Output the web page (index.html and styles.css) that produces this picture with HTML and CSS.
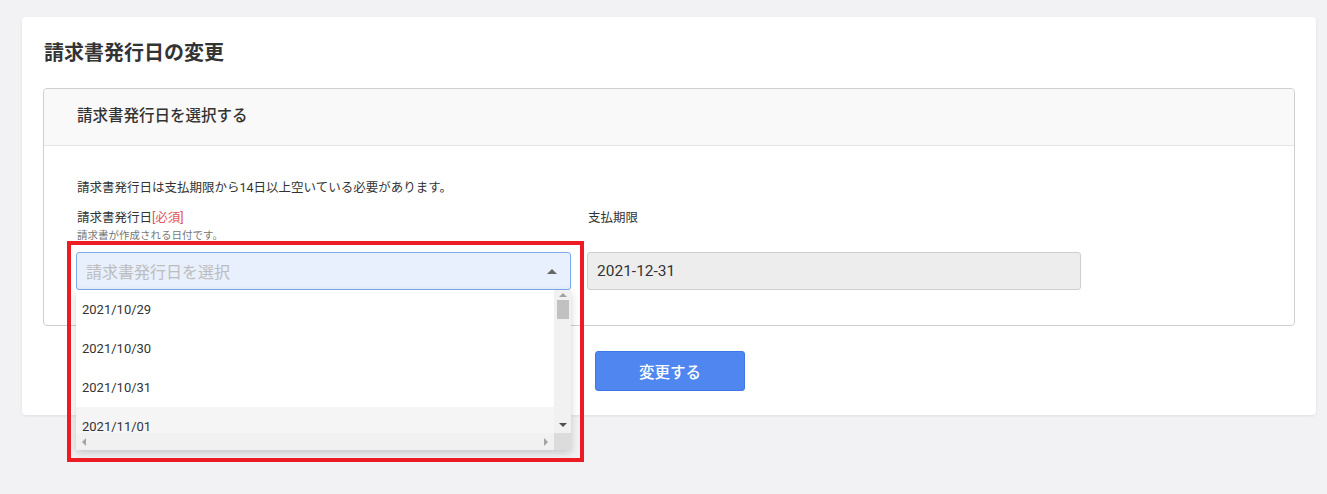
FILE: index.html
```html
<!DOCTYPE html>
<html lang="ja">

<head>
	<meta charset="UTF-8">
	<meta name="viewport" content="width=device-width, initial-scale=1.0">
	<title>請求書発行日の変更</title>
	<link rel="stylesheet" href="styles.css">
</head>

<body>

	<div class="card">
		<h1 class="card-title">請求書発行日の変更</h1>

		<div class="panel">
			<div class="panel-header">請求書発行日を選択する</div>
			<div class="panel-body">
				<p class="note">請求書発行日は支払期限から14日以上空いている必要があります。</p>

				<div class="fields">
					<div class="field">
						<div class="field-label">請求書発行日<span class="required">[必須]</span></div>
						<div class="field-help">請求書が作成される日付です。</div>

						<div class="select-wrap">
							<div class="select open">
								<span class="placeholder">請求書発行日を選択</span>
								<span class="caret"></span>
							</div>

							<div class="dropdown">
								<div class="dropdown-main">
									<ul class="options">
										<li>2021/10/29</li>
										<li>2021/10/30</li>
										<li>2021/10/31</li>
										<li class="hover">2021/11/01</li>
									</ul>
									<div class="vscroll">
										<span class="arrow up"></span>
										<span class="thumb"></span>
										<span class="vscroll-track"></span>
										<span class="arrow down"></span>
									</div>
								</div>
								<div class="hscroll">
									<div class="hscroll-bar">
										<span class="arrow left"></span>
										<span class="arrow right"></span>
									</div>
									<span class="corner"></span>
								</div>
							</div>

							<div class="highlight"></div>
						</div>
					</div>

					<div class="field">
						<div class="field-label">支払期限</div>
						<div class="field-help"></div>
						<input class="input" type="text" value="2021-12-31" disabled>
					</div>
				</div>
			</div>
		</div>

		<div class="actions">
			<button class="btn-primary" type="button">変更する</button>
		</div>
	</div>

</body>

</html>
```

FILE: styles.css
```css
body {
	margin: 0;
	padding: 17px 11px 79px 22px;
	background-color: #f2f2f5;
	font-family: 'Roboto', 'Noto Sans CJK JP', sans-serif;
	color: #333;
}

.card {
	background-color: #fff;
	border-radius: 4px;
	box-shadow: 0 1px 3px rgba(0, 0, 0, 0.08);
	padding: 22px 21px 24px 21px;
}

.card-title {
	margin: 0 0 21px 1px;
	font-size: 20px;
	line-height: 28px;
	font-weight: bold;
	color: #333;
}

.panel {
	border: 1px solid #cfcfcf;
	border-radius: 4px;
}

.panel-header {
	background-color: #f9f9f9;
	border-bottom: 1px solid #e6e6e6;
	border-radius: 4px 4px 0 0;
	height: 56px;
	line-height: 55px;
	padding: 0 33px;
	font-size: 15.5px;
	font-weight: 500;
}

.panel-body {
	padding: 32px 32px 35px 32px;
}

.note {
	margin: 0 0 11px 1px;
	font-size: 12.5px;
	line-height: 20px;
}

.fields {
	display: flex;
	gap: 16px;
}

.field {
	width: 495px;
}

.field-label {
	margin-left: 1px;
	font-size: 12.5px;
	line-height: 18px;
}

.required {
	color: #e0555a;
}

.field-help {
	margin: 2px 0 9px 1px;
	height: 14px;
	font-size: 10.5px;
	line-height: 14px;
	color: #777;
}

.select-wrap {
	position: relative;
}

.select {
	display: flex;
	align-items: center;
	justify-content: space-between;
	box-sizing: border-box;
	height: 38px;
	padding: 0 13px 0 9px;
	border: 1px solid #7eaaf0;
	border-radius: 3px;
	background-color: #e8effd;
}

.placeholder {
	font-size: 16px;
	color: #bdbdbd;
}

.caret {
	width: 0;
	height: 0;
	border-left: 5px solid transparent;
	border-right: 5px solid transparent;
	border-bottom: 5px solid #666;
}

.input {
	display: block;
	box-sizing: border-box;
	width: 494px;
	height: 38px;
	padding: 0 9px;
	border: 1px solid #cfcfcf;
	border-radius: 3px;
	background-color: #ededed;
	font-family: inherit;
	font-size: 15.5px;
	color: #333;
}

/* opened option list */
.dropdown {
	position: absolute;
	top: 100%;
	left: 0;
	width: 495px;
	background-color: #fff;
	box-shadow: 0 3px 8px rgba(0, 0, 0, 0.18);
	z-index: 2;
}

.dropdown-main {
	display: flex;
	height: 143px;
	overflow: hidden;
}

.options {
	flex: 1;
	list-style: none;
	margin: 0;
	padding: 0;
}

.options li {
	height: 39px;
	line-height: 39px;
	padding: 0 6px;
	font-size: 13px;
	color: #333;
}

.options li.hover {
	background-color: #f5f5f5;
}

.vscroll {
	display: flex;
	flex-direction: column;
	align-items: center;
	width: 17px;
	background-color: #f1f1f1;
}

.vscroll-track {
	flex: 1;
}

.thumb {
	width: 12px;
	height: 19px;
	margin-top: 3px;
	background-color: #c1c1c1;
}

.arrow {
	width: 0;
	height: 0;
	border: 4px solid transparent;
}

.arrow.up {
	margin-top: 3px;
	border-top: 0;
	border-bottom-color: #a3a3a3;
}

.arrow.down {
	margin-bottom: 6px;
	border-bottom: 0;
	border-top-color: #505050;
}

.hscroll {
	display: flex;
	height: 17px;
}

.hscroll-bar {
	flex: 1;
	display: flex;
	align-items: center;
	justify-content: space-between;
	padding: 0 6px;
	background-color: #f1f1f1;
}

.arrow.left {
	border-left: 0;
	border-right-color: #a3a3a3;
}

.arrow.right {
	border-right: 0;
	border-left-color: #a3a3a3;
}

.corner {
	width: 17px;
	background-color: #dcdcdc;
}

/* annotation frame */
.highlight {
	position: absolute;
	left: -9px;
	top: -11px;
	width: 517px;
	height: 221px;
	box-sizing: border-box;
	border: 4px solid #ed1c24;
	z-index: 3;
}

.actions {
	display: flex;
	justify-content: center;
	margin-top: 25px;
}

.btn-primary {
	width: 150px;
	height: 40px;
	margin-left: 2px;
	border: 1px solid #3f78e6;
	border-radius: 3px;
	background-color: #5086ef;
	color: #fff;
	font-family: inherit;
	font-size: 15.5px;
	font-weight: 500;
}
```
